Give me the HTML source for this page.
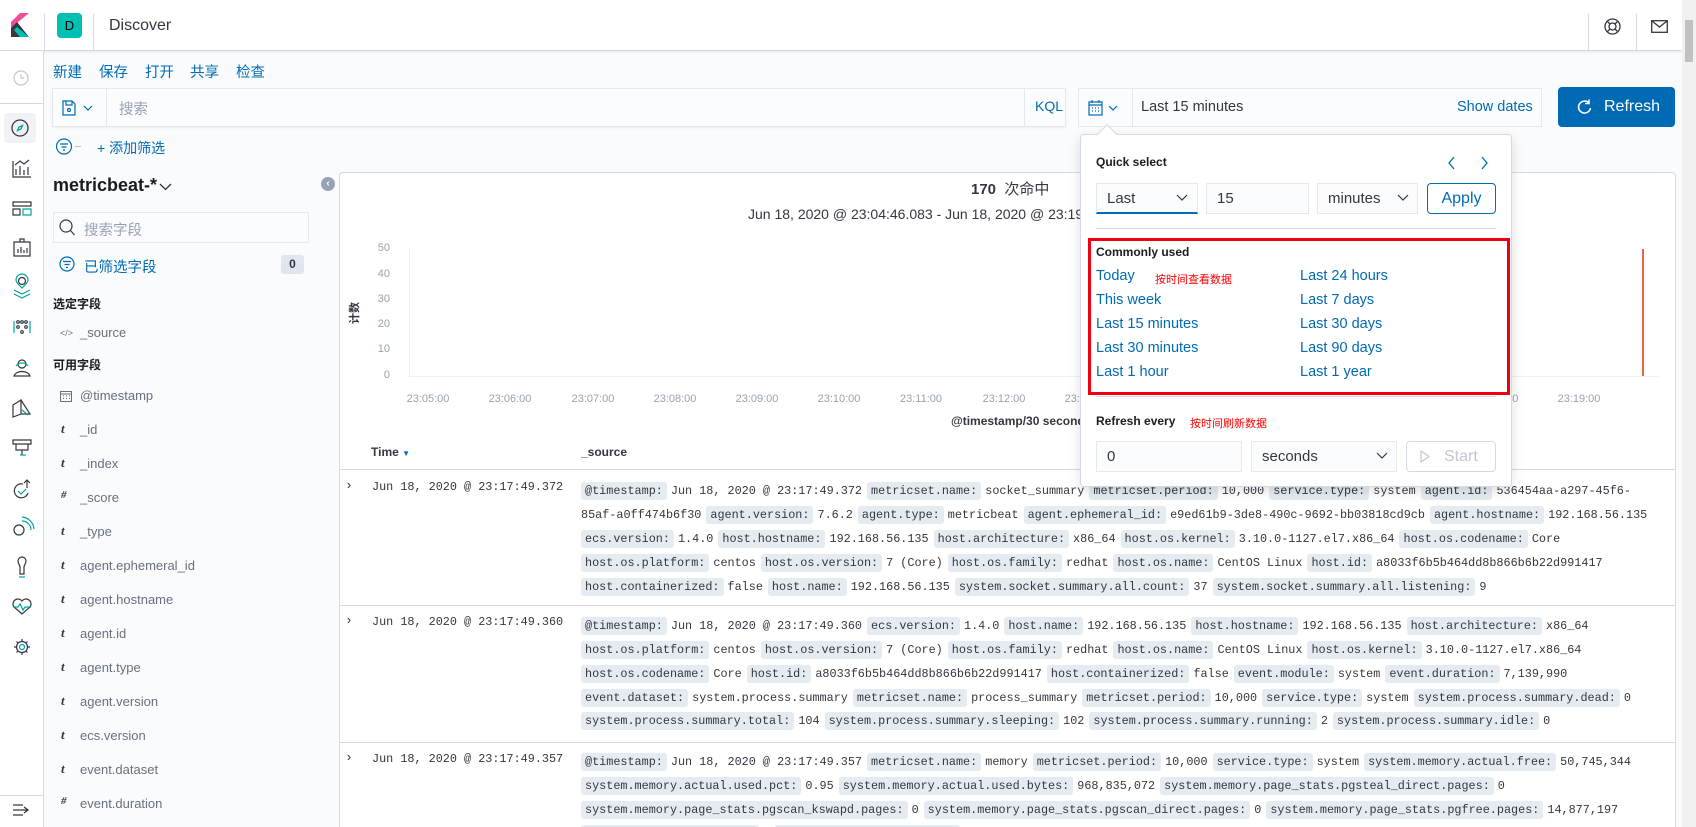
<!DOCTYPE html>
<html><head><meta charset="utf-8">
<style>
*{box-sizing:border-box;margin:0;padding:0}
html,body{width:1696px;height:827px;overflow:hidden}
body{background:#fafbfd;font-family:"Liberation Sans","Noto Sans CJK SC",sans-serif;color:#343741}
#w{position:relative;width:1696px;height:827px;overflow:hidden}
.a{position:absolute}
.hdr{left:0;top:0;width:1682px;height:51px;background:#fff;border-bottom:1px solid #d3dae6;box-shadow:0 1px 3px rgba(0,0,0,.08)}
.nav{left:0;top:51px;width:44px;height:776px;background:#fff;border-right:1px solid #d3dae6}
.lnk{color:#006bb4;font-size:14.5px}
.mono{font-family:"Liberation Mono",monospace;font-size:11.8px;color:#343741;white-space:nowrap}
.k{background:#e6ebf2;padding:2px 4px;border-radius:3px;margin-right:4px}
.v{margin-right:5px}
.ln{position:absolute;left:581px;height:24px;line-height:20px}
.fld{position:absolute;left:80px;font-size:13px;color:#69707d}
.fi{position:absolute;left:61px;font-size:13px;font-weight:bold;font-style:italic;color:#343741;font-family:"Liberation Serif",serif}
.tick{position:absolute;top:393px;font-size:11px;color:#98a2b3;width:60px;text-align:center}
.yl{position:absolute;left:370px;width:20px;text-align:right;font-size:11px;color:#98a2b3}
.inp{position:absolute;background:#fbfcfd;border:1px solid #e4e8ef;font-size:15px;color:#343741;padding-left:10px;line-height:30px}
.ql{position:absolute;color:#006bb4;font-size:14.5px}
.sep{position:absolute;left:339px;width:1337px;height:1px;background:#d3dae6}
</style></head><body><div id="w">

<div class="a hdr"></div>
<svg class="a" style="left:11px;top:13px" width="18" height="24" viewBox="0 0 18 24"><path d="M0 9 9 0h9L0 15z" fill="#f04e98"/><path d="M0 15 6 9l12 15H0z" fill="#343741"/><path d="M6 14 18 24H9L3 17z" fill="#00bfb3"/></svg>
<div class="a" style="left:44px;top:14px;width:1px;height:37px;background:#d3dae6"></div>
<div class="a" style="left:57px;top:13px;width:25px;height:25px;background:#00bfb3;border-radius:4px;color:#000;font-size:13px;text-align:center;line-height:25px">D</div>
<div class="a" style="left:93px;top:14px;width:1px;height:37px;background:#d3dae6"></div>
<div class="a" style="left:109px;top:17px;font-size:16px;color:#343741">Discover</div>
<div class="a" style="left:1588px;top:14px;width:1px;height:37px;background:#d3dae6"></div>
<div class="a" style="left:1636px;top:14px;width:1px;height:37px;background:#d3dae6"></div>
<svg class="a" style="left:1604px;top:18px" width="17" height="17" viewBox="0 0 17 17" fill="none" stroke="#343741" stroke-width="1.3"><circle cx="8.5" cy="8.5" r="7.5"/><circle cx="8.5" cy="8.5" r="3.5"/><path d="M3 3l3 3M14 3l-3 3M3 14l3-3M14 14l-3-3"/></svg>
<svg class="a" style="left:1651px;top:20px" width="17" height="13" viewBox="0 0 17 13" fill="none" stroke="#343741" stroke-width="1.3"><rect x=".7" y=".7" width="15.6" height="11.6"/><path d="M1 1l7.5 6L16 1"/></svg>
<div class="a" style="left:1682px;top:0;width:14px;height:827px;background:#f1f1f1"></div>
<div class="a" style="left:1685px;top:20px;width:8px;height:42px;background:#c1c1c1"></div>

<div class="a nav"></div>
<div class="a" style="left:0;top:103px;width:44px;height:1px;background:#d3dae6"></div>
<svg class="a" style="left:13px;top:70px" width="16" height="16" viewBox="0 0 16 16" fill="none" stroke="#c2c7cf" stroke-width="1.2"><circle cx="8" cy="8" r="7"/><path d="M8 4v4h3"/></svg>
<div class="a" style="left:4px;top:113px;width:32px;height:30px;background:#f0f2f5;border-radius:4px"></div>
<svg class="a" style="left:11px;top:119px" width="18" height="18" viewBox="0 0 18 18" fill="none" stroke="#343741" stroke-width="1.3"><circle cx="9" cy="9" r="8"/><path d="M11.5 6.5L8 8 6.5 11.5 10 10z" stroke="#00a69b"/></svg>
<svg class="a" style="left:0;top:150px" width="44" height="540" viewBox="0 0 44 540" fill="none" stroke="#343741" stroke-width="1.2">
<g transform="translate(0,1)"><path d="M13 10v16h18M16 24v-6M20 24v-9M24 24v-5M28 24v-8M15 14l5-4 4 3 5-4" /></g>
<g transform="translate(0,1)"><path d="M13 51h18v4H13zM13 58h7v6h-7z"/><path d="M23 58h8v6h-8z" stroke="#00a69b"/></g>
<g transform="translate(0,6)"><path d="M14 86h16v14H14zM18 97v-4M21 97v-6M24 97v-3M27 97v-5M20 86v-3h4v3"/></g>
<g transform="translate(0,7)"><circle cx="22" cy="124" r="3.5"/><path d="M22 131c-4-4-6-6-6-8a6 6 0 0 1 12 0c0 2-2 4-6 8zM14 133l8 4 8-4M14 137l8 4 8-4" stroke="#00a69b"/></g>
<g transform="translate(0,9)"><circle cx="18" cy="163" r="1.3"/><circle cx="22" cy="163" r="1.3"/><circle cx="26" cy="163" r="1.3"/><circle cx="18" cy="168" r="1.3"/><circle cx="26" cy="168" r="1.3"/><circle cx="22" cy="173" r="1.3"/><path d="M14 162v12M30 162v12" stroke="#00a69b"/></g>
<g transform="translate(0,13)"><circle cx="22" cy="201" r="4"/><path d="M14 213c2-6 14-6 16 0H14z"/><path d="M16 203c2-4 10-4 12 0" stroke="#00a69b"/></g>
<g transform="translate(0,15)"><path d="M13 240l8-5v14l-8 3zM21 235l9 14H21" /><path d="M22 245l6 5" stroke="#00a69b"/></g>
<g transform="translate(0,15)"><path d="M13 275h18v4H13zM16 279v6h12v-6M22 285v5" /><path d="M20 290h6" stroke="#00a69b"/></g>
<g transform="translate(0,23)"><path d="M27 307v8M24 310l3-3 3 3M28 320a7 7 0 1 1-5-9" /><path d="M18 318l3 3 5-5" stroke="#00a69b"/></g>
<g transform="translate(0,23)"><circle cx="19" cy="357" r="5"/><path d="M22 348a9 9 0 0 1 9 9M22 344a13 13 0 0 1 12 12" stroke="#00a69b"/></g>
<g transform="translate(0,26)"><path d="M18 385a4 4 0 0 1 8 0c0 3-2 4-2 6v7h-4v-7c0-2-2-3-2-6z"/><path d="M19 401h6" stroke="#00a69b"/></g>
<g transform="translate(0,24)"><path d="M22 440l-8-7a4 4 0 0 1 8-6 4 4 0 0 1 8 6z"/><path d="M13 433h5l2-3 3 6 2-3h6" stroke="#00a69b"/></g>
<g transform="translate(0,23)"><circle cx="22" cy="474" r="2.5" stroke="#00a69b"/><path d="M22 466v2M22 480v2M14 474h2M28 474h2M16.5 468.5l1.5 1.5M26 478l1.5 1.5M16.5 479.5l1.5-1.5M26 470l1.5-1.5"/><circle cx="22" cy="474" r="5.5"/></g>
</svg>
<div class="a" style="left:0;top:795px;width:44px;height:1px;background:#d3dae6"></div>
<svg class="a" style="left:12px;top:803px" width="18" height="14" viewBox="0 0 18 14" fill="none" stroke="#343741" stroke-width="1.3"><path d="M1 2h10M1 7h15M1 12h10M12 4l4 3-4 3"/></svg>

<div class="a lnk" style="left:53px;top:61px">新建</div>
<div class="a lnk" style="left:99px;top:61px">保存</div>
<div class="a lnk" style="left:145px;top:61px">打开</div>
<div class="a lnk" style="left:190px;top:61px">共享</div>
<div class="a lnk" style="left:236px;top:61px">检查</div>

<div class="a" style="left:52px;top:88px;width:1014px;height:39px;background:#fbfcfd;border:1px solid #e4e8ef;box-shadow:0 1px 2px rgba(0,0,0,.05)"></div>
<div class="a" style="left:106px;top:88px;width:1px;height:39px;background:#e4e8ef"></div>
<div class="a" style="left:1024px;top:88px;width:1px;height:39px;background:#e4e8ef"></div>
<svg class="a" style="left:62px;top:100px" width="32" height="16" viewBox="0 0 32 16" fill="none" stroke="#006bb4" stroke-width="1.2"><path d="M1 1h9l3 3v11H1zM4 1v4h6V1"/><circle cx="7" cy="10" r="1.5"/><path d="M22 6l4 4 4-4"/></svg>
<div class="a" style="left:119px;top:98px;font-size:14.5px;color:#98a2b3">搜索</div>
<div class="a" style="left:1035px;top:98px;font-size:14px;color:#006bb4">KQL</div>
<div class="a" style="left:1078px;top:88px;width:464px;height:39px;background:#fbfcfd;border:1px solid #e4e8ef"></div>
<div class="a" style="left:1132px;top:88px;width:1px;height:39px;background:#e4e8ef"></div>
<svg class="a" style="left:1088px;top:100px" width="36" height="16" viewBox="0 0 36 16" fill="none" stroke="#006bb4" stroke-width="1.2"><rect x="1" y="2" width="13" height="13"/><path d="M1 5h13M4 0v3M11 0v3M4 8h1M7 8h1M10 8h1M4 11h1M7 11h1M10 11h1"/><path d="M21 6l4 4 4-4"/></svg>
<div class="a" style="left:1141px;top:99px;font-size:14.5px;color:#343741">Last 15 minutes</div>
<div class="a" style="left:1457px;top:99px;font-size:14.5px;color:#006bb4">Show dates</div>
<div class="a" style="left:1558px;top:87px;width:117px;height:40px;background:#006bb4;border-radius:4px;color:#fff;font-size:16px;line-height:40px;padding-left:46px">Refresh</div>
<svg class="a" style="left:1577px;top:99px" width="15" height="16" viewBox="0 0 15 16" fill="none" stroke="#fff" stroke-width="1.5"><path d="M12 4a6 6 0 1 0 1.5 5"/><path d="M12 0.5v4h-4"/></svg>

<svg class="a" style="left:56px;top:138px" width="40" height="17" viewBox="0 0 40 17" fill="none" stroke="#006bb4" stroke-width="1.2"><circle cx="8" cy="8.5" r="7.5"/><path d="M4 6h8M5.5 9h5M7 12h2"/><path d="M19 8.5h6" stroke="#c2c7cf"/></svg>
<div class="a lnk" style="left:97px;top:138px;font-size:14px">+ 添加筛选</div>

<div class="a" style="left:53px;top:175px;font-size:18px;font-weight:bold;color:#1a1c21">metricbeat-*</div>
<svg class="a" style="left:159px;top:183px" width="13" height="8" viewBox="0 0 13 8" fill="none" stroke="#343741" stroke-width="1.3"><path d="M1 1l5.5 5.5L12 1"/></svg>
<div class="a" style="left:321px;top:177px;width:14px;height:14px;border-radius:50%;background:#98a2b3;color:#fff;font-size:10px;line-height:14px;text-align:center;font-weight:bold">‹</div>
<div class="a" style="left:53px;top:212px;width:256px;height:31px;background:#fbfcfd;border:1px solid #e4e8ef"></div>
<svg class="a" style="left:59px;top:219px" width="16" height="17" viewBox="0 0 16 17" fill="none" stroke="#343741" stroke-width="1.2"><circle cx="7" cy="7" r="6"/><path d="M11.5 11.5l4 4.5"/></svg>
<div class="a" style="left:84px;top:219px;font-size:14.5px;color:#98a2b3">搜索字段</div>
<svg class="a" style="left:59px;top:256px" width="16" height="16" viewBox="0 0 16 16" fill="none" stroke="#006bb4" stroke-width="1.2"><circle cx="8" cy="8" r="7"/><path d="M4 5.5h8M5.5 8.5h5M7 11.5h2"/></svg>
<div class="a lnk" style="left:84px;top:256px;font-size:14.5px">已筛选字段</div>
<div class="a" style="left:281px;top:255px;width:23px;height:19px;background:#e0e5ee;border-radius:3px;font-size:12px;text-align:center;line-height:19px;font-weight:bold">0</div>
<div class="a" style="left:53px;top:295px;font-size:12px;font-weight:bold;color:#1a1c21">选定字段</div>
<div class="a" style="left:60px;top:328px;font-size:9px;color:#69707d">&lt;/&gt;</div>
<div class="fld" style="top:325px">_source</div>
<div class="a" style="left:53px;top:356px;font-size:12px;font-weight:bold;color:#1a1c21">可用字段</div>
<svg class="a" style="left:60px;top:390px" width="12" height="12" viewBox="0 0 12 12" fill="none" stroke="#69707d" stroke-width="1"><rect x=".5" y="1.5" width="11" height="10"/><path d="M.5 4h11M3 6h1M6 6h1M9 6h1M3 8.5h1M6 8.5h1M9 8.5h1"/></svg>
<div class="fld" style="top:388px">@timestamp</div>
<div class="fi" style="top:421px">t</div><div class="fld" style="top:422px">_id</div>
<div class="fi" style="top:455px">t</div><div class="fld" style="top:456px">_index</div>
<div class="fi" style="top:489px;font-size:11px">#</div><div class="fld" style="top:490px">_score</div>
<div class="fi" style="top:523px">t</div><div class="fld" style="top:524px">_type</div>
<div class="fi" style="top:557px">t</div><div class="fld" style="top:558px">agent.ephemeral_id</div>
<div class="fi" style="top:591px">t</div><div class="fld" style="top:592px">agent.hostname</div>
<div class="fi" style="top:625px">t</div><div class="fld" style="top:626px">agent.id</div>
<div class="fi" style="top:659px">t</div><div class="fld" style="top:660px">agent.type</div>
<div class="fi" style="top:693px">t</div><div class="fld" style="top:694px">agent.version</div>
<div class="fi" style="top:727px">t</div><div class="fld" style="top:728px">ecs.version</div>
<div class="fi" style="top:761px">t</div><div class="fld" style="top:762px">event.dataset</div>
<div class="fi" style="top:795px;font-size:11px">#</div><div class="fld" style="top:796px">event.duration</div>

<div class="a" style="left:339px;top:172px;width:1337px;height:680px;background:#fff;border:1px solid #d3dae6;border-radius:4px"></div>
<div class="a" style="left:971px;top:178px;font-size:15px;color:#343741"><b>170</b>&nbsp; 次命中</div>
<div class="a" style="left:748px;top:206px;font-size:14px;color:#343741;white-space:nowrap">Jun 18, 2020 @ 23:04:46.083 - Jun 18, 2020 @ 23:19:46.083</div>
<div class="a" style="left:343px;top:305px;font-size:11px;font-weight:bold;transform:rotate(-90deg)">计数</div>
<div class="yl" style="top:242px">50</div><div class="yl" style="top:268px">40</div><div class="yl" style="top:293px">30</div><div class="yl" style="top:318px">20</div><div class="yl" style="top:343px">10</div><div class="yl" style="top:369px">0</div>
<div class="a" style="left:409px;top:248px;width:1px;height:128px;background:#eef0f3"></div>
<div class="a" style="left:409px;top:376px;width:1250px;height:1px;background:#eef0f3"></div>
<div class="a" style="left:1642px;top:249px;width:2px;height:127px;background:#e7664c"></div>
<div class="tick" style="left:398px">23:05:00</div><div class="tick" style="left:480px">23:06:00</div><div class="tick" style="left:563px">23:07:00</div><div class="tick" style="left:645px">23:08:00</div><div class="tick" style="left:727px">23:09:00</div><div class="tick" style="left:809px">23:10:00</div><div class="tick" style="left:891px">23:11:00</div><div class="tick" style="left:974px">23:12:00</div><div class="tick" style="left:1056px">23:13:00</div><div class="tick" style="left:1467px">23:18:00</div><div class="tick" style="left:1549px">23:19:00</div>
<div class="a" style="left:951px;top:414px;font-size:12px;font-weight:bold;white-space:nowrap">@timestamp/30 seconds</div>

<div class="a" style="left:371px;top:445px;font-size:12px;font-weight:bold">Time <span style="color:#006bb4;font-size:8px">▼</span></div>
<div class="a" style="left:581px;top:445px;font-size:12px;font-weight:bold">_source</div>
<div class="sep" style="top:469px"></div>
<div class="sep" style="top:605px"></div>
<div class="sep" style="top:742px"></div>

<div class="a mono" style="left:345px;top:478px;font-size:13px">›</div>
<div class="a mono" style="left:372px;top:480px">Jun 18, 2020 @ 23:17:49.372</div>
<div class="ln mono" style="top:481px"><span class="k">@timestamp:</span><span class="v">Jun 18, 2020 @ 23:17:49.372</span><span class="k">metricset.name:</span><span class="v">socket_summary</span><span class="k">metricset.period:</span><span class="v">10,000</span><span class="k">service.type:</span><span class="v">system</span><span class="k">agent.id:</span><span class="v">536454aa-a297-45f6-</span></div>
<div class="ln mono" style="top:505px"><span class="v">85af-a0ff474b6f30</span><span class="k">agent.version:</span><span class="v">7.6.2</span><span class="k">agent.type:</span><span class="v">metricbeat</span><span class="k">agent.ephemeral_id:</span><span class="v">e9ed61b9-3de8-490c-9692-bb03818cd9cb</span><span class="k">agent.hostname:</span><span class="v">192.168.56.135</span></div>
<div class="ln mono" style="top:529px"><span class="k">ecs.version:</span><span class="v">1.4.0</span><span class="k">host.hostname:</span><span class="v">192.168.56.135</span><span class="k">host.architecture:</span><span class="v">x86_64</span><span class="k">host.os.kernel:</span><span class="v">3.10.0-1127.el7.x86_64</span><span class="k">host.os.codename:</span><span class="v">Core</span></div>
<div class="ln mono" style="top:553px"><span class="k">host.os.platform:</span><span class="v">centos</span><span class="k">host.os.version:</span><span class="v">7 (Core)</span><span class="k">host.os.family:</span><span class="v">redhat</span><span class="k">host.os.name:</span><span class="v">CentOS Linux</span><span class="k">host.id:</span><span class="v">a8033f6b5b464dd8b866b6b22d991417</span></div>
<div class="ln mono" style="top:577px"><span class="k">host.containerized:</span><span class="v">false</span><span class="k">host.name:</span><span class="v">192.168.56.135</span><span class="k">system.socket.summary.all.count:</span><span class="v">37</span><span class="k">system.socket.summary.all.listening:</span><span class="v">9</span></div>

<div class="a mono" style="left:345px;top:613px;font-size:13px">›</div>
<div class="a mono" style="left:372px;top:615px">Jun 18, 2020 @ 23:17:49.360</div>
<div class="ln mono" style="top:616px"><span class="k">@timestamp:</span><span class="v">Jun 18, 2020 @ 23:17:49.360</span><span class="k">ecs.version:</span><span class="v">1.4.0</span><span class="k">host.name:</span><span class="v">192.168.56.135</span><span class="k">host.hostname:</span><span class="v">192.168.56.135</span><span class="k">host.architecture:</span><span class="v">x86_64</span></div>
<div class="ln mono" style="top:640px"><span class="k">host.os.platform:</span><span class="v">centos</span><span class="k">host.os.version:</span><span class="v">7 (Core)</span><span class="k">host.os.family:</span><span class="v">redhat</span><span class="k">host.os.name:</span><span class="v">CentOS Linux</span><span class="k">host.os.kernel:</span><span class="v">3.10.0-1127.el7.x86_64</span></div>
<div class="ln mono" style="top:664px"><span class="k">host.os.codename:</span><span class="v">Core</span><span class="k">host.id:</span><span class="v">a8033f6b5b464dd8b866b6b22d991417</span><span class="k">host.containerized:</span><span class="v">false</span><span class="k">event.module:</span><span class="v">system</span><span class="k">event.duration:</span><span class="v">7,139,990</span></div>
<div class="ln mono" style="top:688px"><span class="k">event.dataset:</span><span class="v">system.process.summary</span><span class="k">metricset.name:</span><span class="v">process_summary</span><span class="k">metricset.period:</span><span class="v">10,000</span><span class="k">service.type:</span><span class="v">system</span><span class="k">system.process.summary.dead:</span><span class="v">0</span></div>
<div class="ln mono" style="top:711px"><span class="k">system.process.summary.total:</span><span class="v">104</span><span class="k">system.process.summary.sleeping:</span><span class="v">102</span><span class="k">system.process.summary.running:</span><span class="v">2</span><span class="k">system.process.summary.idle:</span><span class="v">0</span></div>

<div class="a mono" style="left:345px;top:750px;font-size:13px">›</div>
<div class="a mono" style="left:372px;top:752px">Jun 18, 2020 @ 23:17:49.357</div>
<div class="ln mono" style="top:752px"><span class="k">@timestamp:</span><span class="v">Jun 18, 2020 @ 23:17:49.357</span><span class="k">metricset.name:</span><span class="v">memory</span><span class="k">metricset.period:</span><span class="v">10,000</span><span class="k">service.type:</span><span class="v">system</span><span class="k">system.memory.actual.free:</span><span class="v">50,745,344</span></div>
<div class="ln mono" style="top:776px"><span class="k">system.memory.actual.used.pct:</span><span class="v">0.95</span><span class="k">system.memory.actual.used.bytes:</span><span class="v">968,835,072</span><span class="k">system.memory.page_stats.pgsteal_direct.pages:</span><span class="v">0</span></div>
<div class="ln mono" style="top:800px"><span class="k">system.memory.page_stats.pgscan_kswapd.pages:</span><span class="v">0</span><span class="k">system.memory.page_stats.pgscan_direct.pages:</span><span class="v">0</span><span class="k">system.memory.page_stats.pgfree.pages:</span><span class="v">14,877,197</span></div>
<div class="ln mono" style="top:824px"><span class="k">system.memory.swap.free:</span><span class="v">0</span><span class="k">system.memory.swap.total:</span><span class="v">0</span></div>

<div class="a" style="left:1080px;top:134px;width:432px;height:353px;background:#fff;border:1px solid #d3dae6;border-radius:4px;box-shadow:0 4px 12px rgba(0,0,0,.12)"></div>
<div class="a" style="left:1100px;top:127px;width:14px;height:14px;background:#fff;border-left:1px solid #d3dae6;border-top:1px solid #d3dae6;transform:rotate(45deg)"></div>
<div class="a" style="left:1096px;top:155px;font-size:12px;font-weight:bold;color:#1a1c21">Quick select</div>
<svg class="a" style="left:1447px;top:156px" width="42" height="14" viewBox="0 0 42 14" fill="none" stroke="#006bb4" stroke-width="1.3"><path d="M7 1L2 7l5 6M35 1l5 6-5 6"/></svg>
<div class="inp" style="left:1096px;top:183px;width:102px;height:31px;border-bottom:2px solid #006bb4">Last</div>
<svg class="a" style="left:1176px;top:194px" width="12" height="8" viewBox="0 0 12 8" fill="none" stroke="#343741" stroke-width="1.2"><path d="M1 1l5 5 5-5"/></svg>
<div class="inp" style="left:1206px;top:183px;width:103px;height:31px">15</div>
<div class="inp" style="left:1317px;top:183px;width:101px;height:31px">minutes</div>
<svg class="a" style="left:1397px;top:194px" width="12" height="8" viewBox="0 0 12 8" fill="none" stroke="#343741" stroke-width="1.2"><path d="M1 1l5 5 5-5"/></svg>
<div class="a" style="left:1427px;top:183px;width:69px;height:31px;border:1px solid #006bb4;border-radius:4px;color:#006bb4;font-size:16px;text-align:center;line-height:29px">Apply</div>
<div class="a" style="left:1096px;top:228px;width:400px;height:1px;background:#d3dae6"></div>
<div class="a" style="left:1096px;top:396px;width:400px;height:1px;background:#d3dae6"></div>
<div class="a" style="left:1088px;top:238px;width:422px;height:157px;border:3px solid #f0000f"></div>
<div class="a" style="left:1096px;top:245px;font-size:12px;font-weight:bold;color:#1a1c21">Commonly used</div>
<div class="ql" style="left:1096px;top:268px">Today</div>
<div class="a" style="left:1155px;top:271px;font-size:11px;color:#f00">按时间查看数据</div>
<div class="ql" style="left:1096px;top:292px">This week</div>
<div class="ql" style="left:1096px;top:316px">Last 15 minutes</div>
<div class="ql" style="left:1096px;top:340px">Last 30 minutes</div>
<div class="ql" style="left:1096px;top:364px">Last 1 hour</div>
<div class="ql" style="left:1300px;top:268px">Last 24 hours</div>
<div class="ql" style="left:1300px;top:292px">Last 7 days</div>
<div class="ql" style="left:1300px;top:316px">Last 30 days</div>
<div class="ql" style="left:1300px;top:340px">Last 90 days</div>
<div class="ql" style="left:1300px;top:364px">Last 1 year</div>
<div class="a" style="left:1096px;top:414px;font-size:12px;font-weight:bold;color:#1a1c21">Refresh every</div>
<div class="a" style="left:1190px;top:415px;font-size:11px;color:#f00">按时间刷新数据</div>
<div class="inp" style="left:1096px;top:441px;width:146px;height:31px">0</div>
<div class="inp" style="left:1251px;top:441px;width:146px;height:31px">seconds</div>
<svg class="a" style="left:1376px;top:452px" width="12" height="8" viewBox="0 0 12 8" fill="none" stroke="#343741" stroke-width="1.2"><path d="M1 1l5 5 5-5"/></svg>
<div class="a" style="left:1406px;top:441px;width:90px;height:31px;border:1px solid #d3dae6;border-radius:4px;color:#c2c7cf;font-size:16px;line-height:29px;padding-left:37px">Start</div>
<svg class="a" style="left:1420px;top:450px" width="10" height="13" viewBox="0 0 10 13" fill="none" stroke="#c2c7cf" stroke-width="1.2"><path d="M1 1l8 5.5L1 12z"/></svg>
</div></body></html>
